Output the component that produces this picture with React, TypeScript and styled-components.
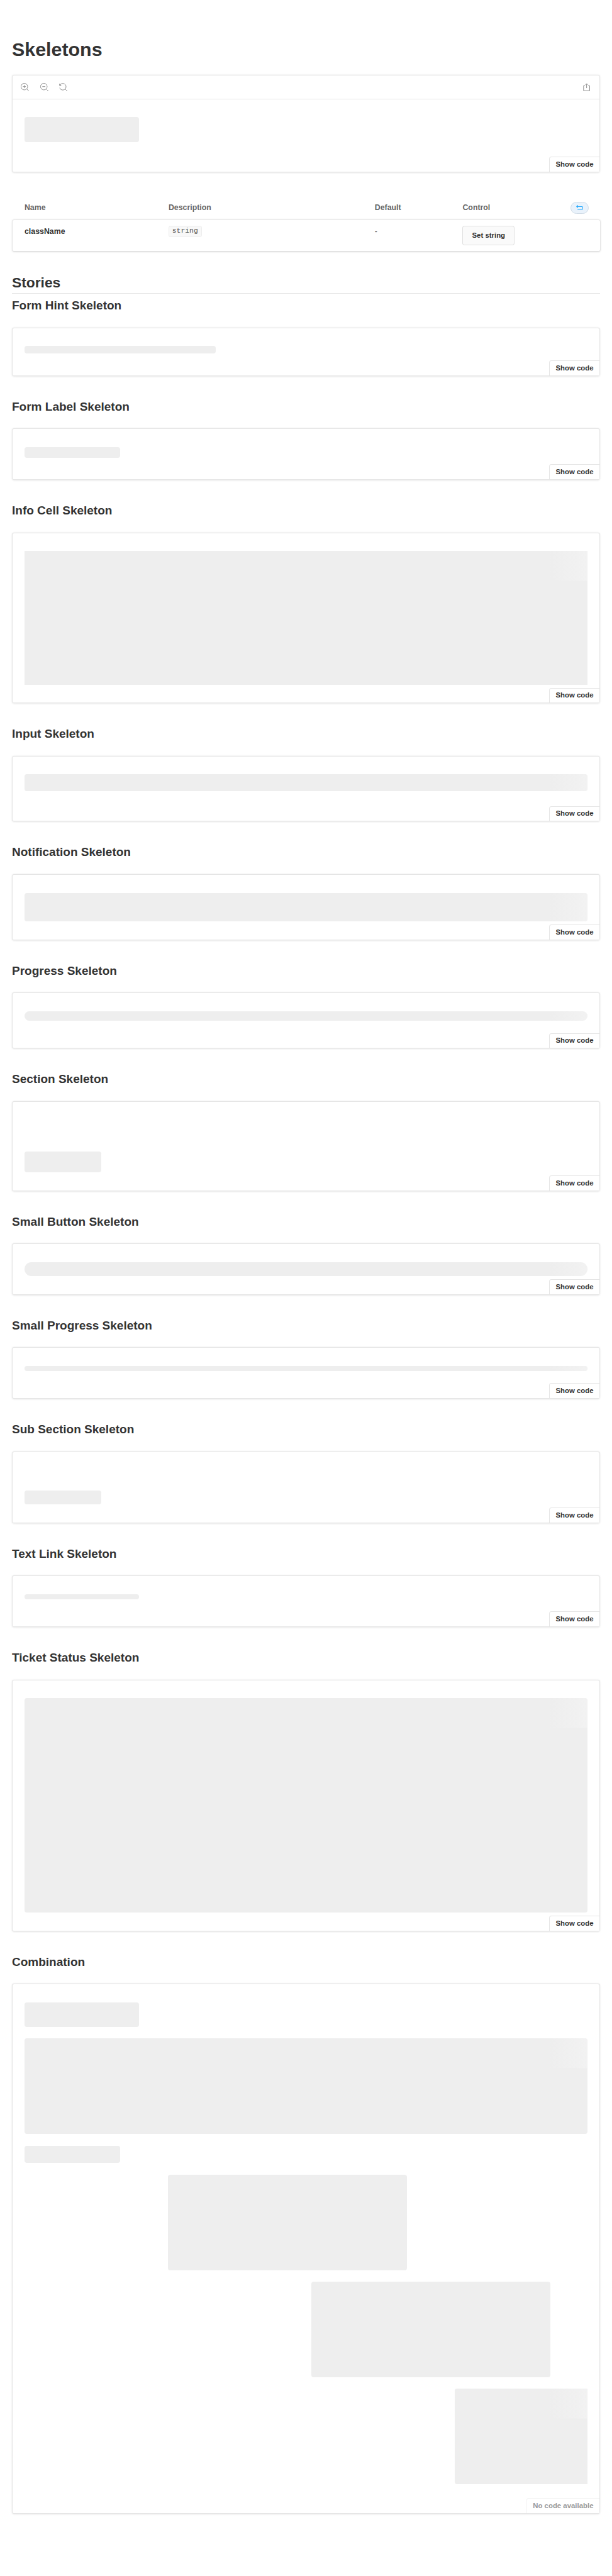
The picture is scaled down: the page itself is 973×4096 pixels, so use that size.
import React from 'react';
import styled, { createGlobalStyle, css } from 'styled-components';

const GlobalStyle = createGlobalStyle`
  body { margin: 0; background: #fff; }
  * { box-sizing: border-box; }
`;

const border = 'rgba(0, 0, 0, 0.1)';

const Page = styled.main`
  zoom: 0.9502;
  width: 1024px;
  height: 4311px;
  padding: 64px 20px;
  background: #fff;
  color: #333;
  font-family: "Liberation Sans", Arial, sans-serif;
  -webkit-font-smoothing: antialiased;
`;

const Title = styled.h1`
  margin: 0 0 25px;
  font-size: 32px;
  line-height: 36px;
  font-weight: 700;
`;

const StoriesHeading = styled.h2`
  margin: 0 0 8px;
  height: 36px;
  border-bottom: 1px solid ${border};
  font-size: 24px;
  line-height: 35px;
  font-weight: 700;
`;

const StoryHeading = styled.h3`
  margin: 0;
  font-size: 20px;
  line-height: 23px;
  font-weight: 700;
`;

const Story = styled.section`
  display: flex;
  flex-direction: column;
  gap: 25px;
  margin-bottom: 40px;
`;

const Preview = styled.div<{ $height: number }>`
  position: relative;
  flex: none;
  height: ${(p) => p.$height}px;
  border: 1px solid ${border};
  border-radius: 4px;
  background: #fff;
  box-shadow: rgba(0, 0, 0, 0.1) 0 1px 3px 0;
`;

const Canvas = styled.div`
  display: flex;
  flex-direction: column;
  padding: 30px 20px;
`;

const Toolbar = styled.div`
  display: flex;
  align-items: center;
  justify-content: space-between;
  height: 40px;
  padding: 0 14px;
  border-bottom: 1px solid ${border};
`;

const ToolGroup = styled.div`
  display: flex;
  gap: 18px;
`;

const ToolIcon = styled.svg`
  display: block;
  width: 14px;
  height: 14px;
  fill: none;
  stroke: #8f8f8f;
  stroke-width: 1.05;
`;

const CodeButton = styled.button<{ $disabled?: boolean }>`
  position: absolute;
  right: 0;
  bottom: 0;
  height: 25px;
  padding: 4px 10px;
  border: 0 solid ${border};
  border-width: 1px 0 0 1px;
  border-radius: 4px 0 0 0;
  background: #fff;
  color: #333;
  font: 700 12px/16px "Liberation Sans", Arial, sans-serif;
  ${(p) => p.$disabled && css`
    color: #999;
    border-color: rgba(0, 0, 0, 0.05);
  `}
`;

interface BoneProps {
  $w?: number;
  $h: number;
  $radius?: string;
  $top?: number;
  $left?: number;
  $glow?: boolean;
}

const Bone = styled.div<BoneProps>`
  flex: none;
  width: ${(p) => (p.$w ? `${p.$w}px` : 'auto')};
  height: ${(p) => p.$h}px;
  margin-top: ${(p) => p.$top ?? 0}px;
  margin-left: ${(p) => p.$left ?? 0}px;
  border-radius: ${(p) => p.$radius ?? '4px'};
  background-color: #eee;
  ${(p) => p.$glow && css`
    background-image: linear-gradient(90deg, #eee 30%, #f2f2f2);
    background-size: 90px 50px;
    background-position: right top;
    background-repeat: no-repeat;
  `}
`;

const ArgsTable = styled.div`
  width: 985px;
  margin: 40px 0 35px;
`;

const ArgsRow = styled.div`
  display: grid;
  grid-template-columns: 241px 345px 147px 1fr;
  padding-left: 21px;
`;

const ArgsHead = styled(ArgsRow)`
  align-items: center;
  height: 39px;
  padding-top: 1px;
  color: #666;
  font-size: 13px;
  line-height: 20px;
  font-weight: 700;
`;

const ArgsBody = styled(ArgsRow)`
  height: 54px;
  padding-top: 10px;
  border: 1px solid ${border};
  border-bottom-color: rgba(0, 0, 0, 0.14);
  border-radius: 4px;
  padding-left: 20px;
  box-shadow: rgba(0, 0, 0, 0.1) 0 1px 3px 0;
  font-size: 13px;
  line-height: 20px;
`;

const ControlHead = styled.div`
  display: flex;
  align-items: center;
  justify-content: space-between;
  padding-right: 20px;
`;

const ArgName = styled.span`
  font-weight: 700;
`;

const TypeCode = styled.code`
  display: inline-block;
  height: 19px;
  padding: 0 5px;
  border: 1px solid #eee;
  border-radius: 3px;
  background: #f8f8f8;
  color: #555;
  font: 12px/16px "Liberation Mono", monospace;
  vertical-align: top;
`;

const SetButton = styled.button`
  display: block;
  width: 87px;
  height: 32px;
  padding: 0;
  border: 1px solid ${border};
  border-radius: 4px;
  background: #fafafa;
  color: #333;
  font: 700 12px/16px "Liberation Sans", Arial, sans-serif;
`;

const ResetButton = styled.button`
  display: flex;
  align-items: center;
  justify-content: center;
  width: 30px;
  height: 20px;
  padding: 0;
  border: 1px solid #d0dce7;
  border-radius: 10px;
  background: #e9f2fb;
`;

const ResetIcon = styled.svg`
  width: 12px;
  height: 12px;
  fill: none;
  stroke: #1ea7fd;
  stroke-width: 1.1;
`;

const ZoomIn = () => (
  <ToolIcon viewBox="0 0 14 14">
    <circle cx="6" cy="6" r="5.5" />
    <path d="M10 10l3.6 3.6M3.5 6h5M6 3.5v5" />
  </ToolIcon>
);

const ZoomOut = () => (
  <ToolIcon viewBox="0 0 14 14">
    <circle cx="6" cy="6" r="5.5" />
    <path d="M10 10l3.6 3.6M3.5 6h5" />
  </ToolIcon>
);

const ZoomReset = () => (
  <ToolIcon viewBox="0 0 14 14">
    <path d="M2 2.6A5.5 5.5 0 1 1 .9 8M10 10l3.6 3.6" />
    <path d="M.5 1.2v3h3z" fill="#8f8f8f" strokeWidth=".6" />
  </ToolIcon>
);

const Share = () => (
  <ToolIcon viewBox="0 0 14 14">
    <path d="M4.4 4.5H1.9v8.4h10.2V4.5H9.6M7 8.5V1.2M5 3l2-2 2 2" />
  </ToolIcon>
);

const Undo = () => (
  <ResetIcon viewBox="0 0 12 12">
    <path d="M.8 3.7h8.3a2.4 2.4 0 0 1 0 4.8H2.3M3 1.4L.7 3.7 3 6" />
  </ResetIcon>
);

const stories: { name: string; height: number; bone: BoneProps }[] = [
  { name: 'Form Hint Skeleton', height: 81, bone: { $w: 320, $h: 13 } },
  { name: 'Form Label Skeleton', height: 86, bone: { $w: 160, $h: 18 } },
  { name: 'Info Cell Skeleton', height: 286, bone: { $h: 224, $radius: '0', $glow: true } },
  { name: 'Input Skeleton', height: 110, bone: { $h: 28, $glow: true } },
  { name: 'Notification Skeleton', height: 110, bone: { $h: 48, $glow: true } },
  { name: 'Progress Skeleton', height: 94, bone: { $h: 16, $radius: '8px', $glow: true } },
  { name: 'Section Skeleton', height: 150, bone: { $w: 128, $h: 35, $top: 53 } },
  { name: 'Small Button Skeleton', height: 86, bone: { $h: 24, $radius: '12px', $glow: true } },
  { name: 'Small Progress Skeleton', height: 86, bone: { $h: 8, $glow: true } },
  { name: 'Sub Section Skeleton', height: 120, bone: { $w: 128, $h: 24, $top: 34 } },
  { name: 'Text Link Skeleton', height: 86, bone: { $w: 192, $h: 8 } },
  { name: 'Ticket Status Skeleton', height: 421, bone: { $h: 359, $glow: true } },
];

export default function App() {
  return (
    <>
      <GlobalStyle />
      <Page>
        <Title>Skeletons</Title>
        <Preview $height={163}>
          <Toolbar>
            <ToolGroup>
              <ZoomIn />
              <ZoomOut />
              <ZoomReset />
            </ToolGroup>
            <Share />
          </Toolbar>
          <Canvas>
            <Bone $w={192} $h={42} />
          </Canvas>
          <CodeButton>Show code</CodeButton>
        </Preview>

        <ArgsTable>
          <ArgsHead>
            <span>Name</span>
            <span>Description</span>
            <span>Default</span>
            <ControlHead>
              <span>Control</span>
              <ResetButton aria-label="Reset controls">
                <Undo />
              </ResetButton>
            </ControlHead>
          </ArgsHead>
          <ArgsBody>
            <ArgName>className</ArgName>
            <div>
              <TypeCode>string</TypeCode>
            </div>
            <span>-</span>
            <SetButton>Set string</SetButton>
          </ArgsBody>
        </ArgsTable>

        <StoriesHeading>Stories</StoriesHeading>
        {stories.map(({ name, height, bone }) => (
          <Story key={name}>
            <StoryHeading>{name}</StoryHeading>
            <Preview $height={height}>
              <Canvas>
                <Bone {...bone} />
              </Canvas>
              <CodeButton>Show code</CodeButton>
            </Preview>
          </Story>
        ))}
        <Story>
          <StoryHeading>Combination</StoryHeading>
          <Preview $height={887}>
            <Canvas>
              <Bone $w={192} $h={41} />
              <Bone $h={160} $top={19} $glow />
              <Bone $w={160} $h={28} $top={20} />
              <Bone $w={400} $h={160} $top={20} $left={240} />
              <Bone $w={400} $h={160} $top={19} $left={480} />
              <Bone $h={160} $top={19} $left={720} $radius="4px 0 0 4px" $glow />
            </Canvas>
            <CodeButton $disabled>No code available</CodeButton>
          </Preview>
        </Story>
      </Page>
    </>
  );
}
